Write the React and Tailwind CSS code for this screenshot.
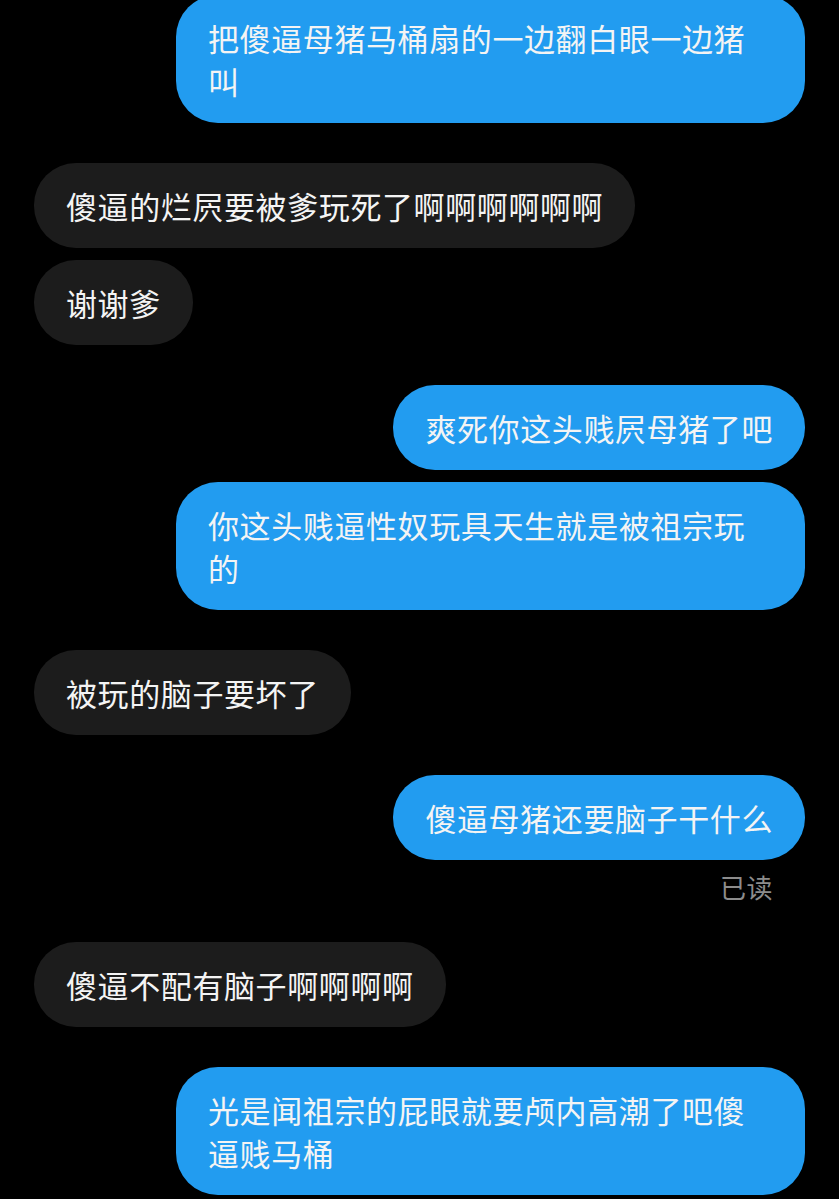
import React from 'react';

const messages = [
    { id: 1, mine: true, text: '把傻逼母猪马桶扇的一边翻白眼一边猪叫' },
    { id: 2, mine: false, text: '傻逼的烂屄要被爹玩死了啊啊啊啊啊啊' },
    { id: 3, mine: false, text: '谢谢爹' },
    { id: 4, mine: true, text: '爽死你这头贱屄母猪了吧' },
    { id: 5, mine: true, text: '你这头贱逼性奴玩具天生就是被祖宗玩的' },
    { id: 6, mine: false, text: '被玩的脑子要坏了' },
    { id: 7, mine: true, text: '傻逼母猪还要脑子干什么', read: true },
    { id: 8, mine: false, text: '傻逼不配有脑子啊啊啊啊' },
    { id: 9, mine: true, text: '光是闻祖宗的屁眼就要颅内高潮了吧傻逼贱马桶' },
];

const Bubble = ({ msg }) => (
    <div className={`flex flex-col ${msg.mine ? 'items-end' : 'items-start'}`}>
        <div
            className={`max-w-[629px] rounded-[42px] px-[32px] py-[21px] text-[31px] leading-[43px] tracking-[0.6px] text-[#f4f4f4] break-all ${msg.mine ? 'bg-[#229cf0]' : 'bg-[#1c1c1c]'
                }`}
        >
            {msg.text}
        </div>
        {msg.read && (
            <div className="mt-[12px] pr-[32px] text-[26px] leading-[30px] tracking-[0.5px] text-[#8c8c8c]">已读</div>
        )}
    </div>
);

const App = () => {
    // 12px between bubbles of the same sender, 40px when the sender changes
    return (
        <div
            className="h-[1199px] overflow-hidden bg-black px-[34px]"
            style={{ fontFamily: '"Noto Sans CJK SC", "Noto Sans", sans-serif' }}
        >
            <div className="-mt-[5px] flex flex-col">
                {messages.map((msg, i) => {
                    const prev = messages[i - 1];
                    const gap = !prev ? '' : prev.mine === msg.mine ? 'mt-[12px]' : 'mt-[40px]';
                    return (
                        <div key={msg.id} className={gap}>
                            <Bubble msg={msg} />
                        </div>
                    );
                })}
            </div>
        </div>
    );
};

export default App;
